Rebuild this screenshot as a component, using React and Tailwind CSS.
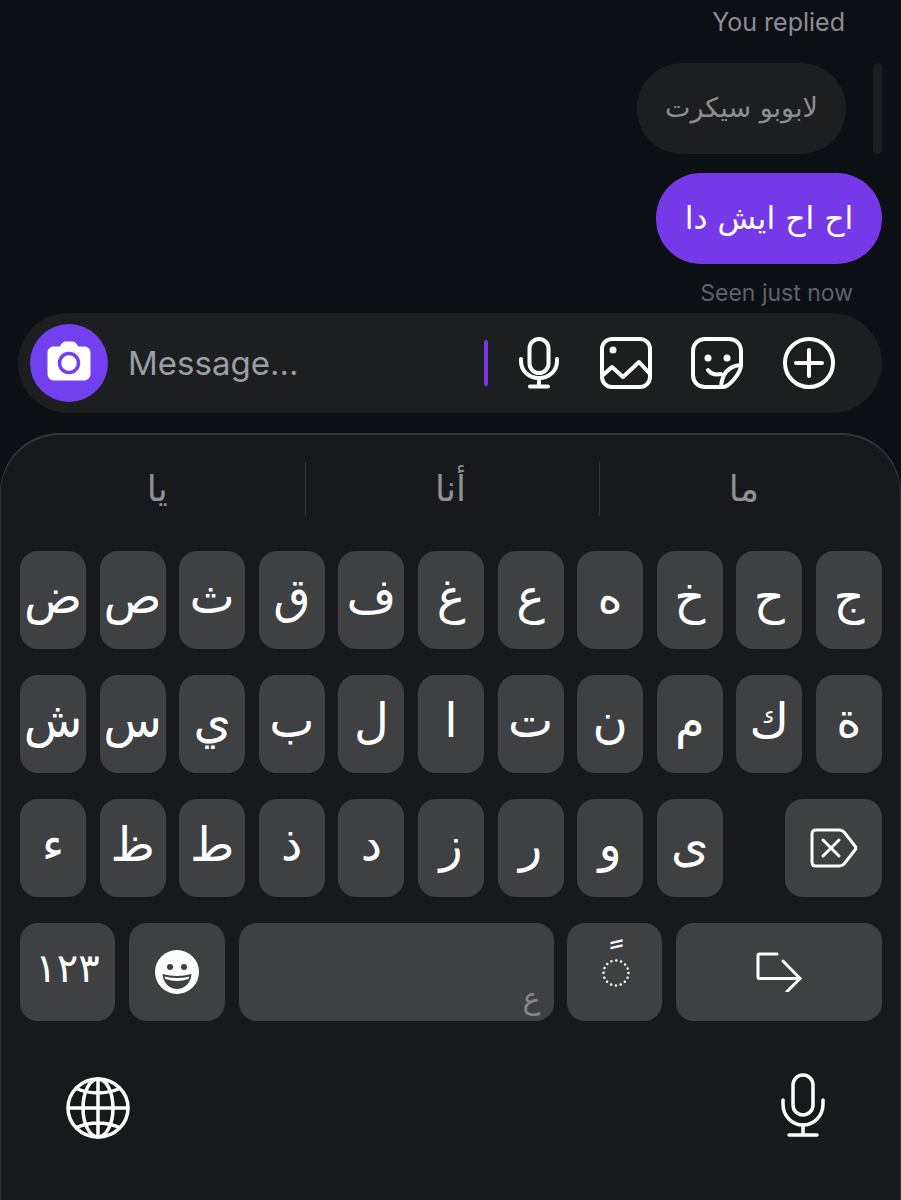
import React from 'react';

const arabic = "font-['DejaVu_Sans',sans-serif]";

const rowOne = ['ض', 'ص', 'ث', 'ق', 'ف', 'غ', 'ع', 'ه', 'خ', 'ح', 'ج'];
const rowTwo = ['ش', 'س', 'ي', 'ب', 'ل', 'ا', 'ت', 'ن', 'م', 'ك', 'ة'];
const rowThree = ['ء', 'ظ', 'ط', 'ذ', 'د', 'ز', 'ر', 'و', 'ى'];

// Toolbar and keyboard icons
const CameraIcon = () => (
  <svg className="mb-[4px]" width="44" height="40" viewBox="0 0 44 40">
    <path d="M13 5.500C14 2.500 16 0.500 19 0.500h6c3 0 5 2 6 5h6.500c3 0 6 2.500 6 6V33c0 3.500-3 6.500-6 6.500h-31c-3 0-6-3-6-6.500V11.500c0-3.500 3-6 6-6z" fill="#fff" />
    <circle cx="22" cy="22" r="9.500" fill="none" stroke="#7340f0" strokeWidth="3.500" />
  </svg>
);

const SmallMicIcon = () => (
  <svg width="40" height="52" viewBox="0 0 40 52" fill="none" stroke="#fff" strokeWidth="4" strokeLinecap="round" strokeLinejoin="round">
    <rect x="10.500" y="2" width="19" height="34" rx="9.500" />
    <path d="M2 22v2c0 10 8 17 18 17s18-7 18-17v-2" />
    <path d="M20 41v8M11 49.500h18" />
  </svg>
);

const LargeMicIcon = () => (
  <svg width="44" height="64" viewBox="0 0 44 64" fill="none" stroke="#fff" strokeWidth="3.500" strokeLinecap="round" strokeLinejoin="round">
    <rect x="12" y="2" width="20" height="40" rx="10" />
    <path d="M2 27v4c0 12 9 21 20 21s20-9 20-21v-4" />
    <path d="M22 52v10M8 62h28" />
  </svg>
);

const ImageIcon = () => (
  <svg width="52" height="52" viewBox="0 0 52 52" fill="none" stroke="#fff" strokeWidth="4" strokeLinecap="round" strokeLinejoin="round">
    <rect x="2" y="2" width="48" height="48" rx="10" />
    <circle cx="13" cy="13" r="3.500" fill="#fff" stroke="none" />
    <path d="M2 39l10-9 11 10 16-15 11 12" />
  </svg>
);

const StickerIcon = () => (
  <svg width="52" height="52" viewBox="0 0 52 52" fill="none" stroke="#fff" strokeWidth="4" strokeLinecap="round" strokeLinejoin="round">
    <path d="M32 50H14C7 50 2 45 2 38V14C2 7 7 2 14 2h24c7 0 12 5 12 12v14C50 36 38 50 32 50z" />
    <path d="M50 28C38 29 31 36 30 50" />
    <path d="M17 33c3 4 8 5 13 4" />
    <circle cx="17" cy="21" r="3.500" fill="#fff" stroke="none" />
    <circle cx="36" cy="21" r="3.500" fill="#fff" stroke="none" />
  </svg>
);

const PlusIcon = () => (
  <svg width="54" height="54" viewBox="0 0 54 54" fill="none" stroke="#fff" strokeWidth="4" strokeLinecap="round">
    <circle cx="27" cy="27" r="24" />
    <path d="M27 14v26M14 27h26" />
  </svg>
);

const BackspaceIcon = () => (
  <svg width="48" height="40" viewBox="0 0 48 40" fill="none" stroke="#fff" strokeWidth="3" strokeLinecap="round" strokeLinejoin="round">
    <path d="M6 2h23c2 0 3.500 0.500 5 2l11 14c1 1.300 1 2.700 0 4L34 36c-1.500 1.500-3 2-5 2H6c-2.500 0-4-1.500-4-4V6c0-2.500 1.500-4 4-4z" />
    <path d="M13 12l16 16M29 12L13 28" />
  </svg>
);

const EnterIcon = () => (
  <svg width="46" height="40" viewBox="0 0 46 40" fill="none" stroke="#fff" strokeWidth="3" strokeLinecap="round" strokeLinejoin="round">
    <path d="M21 2H3.500c-1 0-1.500 0.500-1.500 1.500V25c0 1 .5 1.500 1.500 1.500H44" />
    <path d="M27 9l17 17.500-13 13" />
  </svg>
);

const EmojiIcon = () => (
  <svg width="44" height="44" viewBox="0 0 44 44">
    <circle cx="22" cy="22" r="22" fill="#fff" />
    <circle cx="15" cy="17" r="3" fill="#3f4042" />
    <circle cx="29" cy="17" r="3" fill="#3f4042" />
    <path d="M7.500 24Q22 28 36.500 24C36 33 29 39 22 39S8 33 7.500 24z" fill="#3f4042" />
    <path d="M9.500 26.500Q22 29.500 34.500 26.500L33.500 29Q22 33 10.500 29z" fill="#fff" />
  </svg>
);

const GlobeIcon = () => (
  <svg width="64" height="62" viewBox="0 0 64 62" fill="none" stroke="#fff" strokeWidth="3.500">
    <ellipse cx="32" cy="31" rx="30" ry="29" />
    <ellipse cx="32" cy="31" rx="15" ry="29" />
    <path d="M32 2v58M2 31h60M9 11Q32 21 55 11M9 51Q32 41 55 51" />
  </svg>
);

const Key = ({ children, className = 'w-[66px]' }) => (
  <div className={`${className} h-[98px] shrink-0 rounded-[18px] bg-[#3f4042] flex items-center justify-center text-white relative ${arabic}`}>
    {children}
  </div>
);

const Letter = ({ letter }) => (
  <Key>
    <span className="text-[48px] leading-none mb-[8px]">{letter}</span>
  </Key>
);

const Suggestion = ({ text, divider }) => (
  <div className={`flex-1 h-[54px] pr-[4px] flex items-center justify-center text-[36px] text-[#8f9092] ${arabic} ${divider ? 'border-r border-[#37393c]' : ''}`}>
    {text}
  </div>
);

export default function App() {
  return (
    <div className="w-[901px] h-[1200px] overflow-hidden bg-[#0c0f14] flex flex-col font-['Inter',sans-serif]">
      {/* Message thread */}
      <div className="h-[313px] pt-[7px] pr-[19px] flex flex-col items-end">
        <div className="pr-[37px] h-[30px] leading-[30px] text-[25px] text-[#8e8e93]">You replied</div>
        <div className="mt-[26px] flex items-start gap-[27px]">
          <div className={`w-[209px] h-[91px] rounded-[45px] bg-[#1c1e20] flex items-center justify-center text-[27px] text-[#8e8e93] ${arabic}`} dir="rtl">
            لابوبو سيكرت
          </div>
          <div className="w-[9px] h-[91px] rounded-full bg-[#1c1e20]" />
        </div>
        <div className={`mt-[19px] w-[226px] h-[91px] rounded-[45px] bg-[#7539e8] flex items-center justify-center text-[31.500px] text-white ${arabic}`} dir="rtl">
          اح اح ايش دا
        </div>
        <div className="mt-[15px] pr-[29px] h-[28px] leading-[28px] text-[23px] text-[#5f6368]">Seen just now</div>
      </div>

      {/* Composer */}
      <div className="mx-[18px] w-[864px] h-[100px] shrink-0 rounded-[50px] bg-[#1c1e20] flex items-center pl-[12px]">
        <div className="w-[78px] h-[78px] rounded-full bg-[#7340f0] flex items-center justify-center">
          <CameraIcon />
        </div>
        <div className="ml-[20px] mt-[2px] w-[356px] text-[33px] text-[#9b9ea3]">Message...</div>
        <div className="w-[4px] h-[46px] rounded-full bg-[#7539e8]" />
        <div className="ml-[31px] flex items-center">
          <SmallMicIcon />
          <div className="ml-[41px]"><ImageIcon /></div>
          <div className="ml-[39px]"><StickerIcon /></div>
          <div className="ml-[39px]"><PlusIcon /></div>
        </div>
      </div>

      {/* Keyboard */}
      <div className="mt-[20px] flex-1 rounded-t-[60px] border-t-2 border-x border-[#33363a] bg-[#17191c] flex flex-col">
        <div className="mt-[27px] flex pl-[12px] pr-[8px]">
          <Suggestion text="يا" divider />
          <Suggestion text="أنا" divider />
          <Suggestion text="ما" />
        </div>
        <div className="mt-[35px] pl-[19px] pr-[18px] flex flex-col gap-[26px]">
          <div className="flex justify-between">
            {rowOne.map((letter) => <Letter key={letter} letter={letter} />)}
          </div>
          <div className="flex justify-between">
            {rowTwo.map((letter) => <Letter key={letter} letter={letter} />)}
          </div>
          <div className="flex justify-between">
            <div className="flex gap-[13.600px]">
              {rowThree.map((letter) => <Letter key={letter} letter={letter} />)}
            </div>
            <Key className="w-[97px]"><BackspaceIcon /></Key>
          </div>
          <div className="flex justify-between">
            <Key className="w-[95px]"><span className="text-[40px] leading-none mb-[8px]">١٢٣</span></Key>
            <Key className="w-[96px]"><EmojiIcon /></Key>
            <Key className="w-[315px]">
              <span className="absolute right-[13px] bottom-[7px] text-[30px] leading-none text-[#85868a]">ع</span>
            </Key>
            <Key className="w-[95px]">
              <svg className="mt-[2px] ml-[2px]" width="28" height="28" viewBox="0 0 28 28" fill="none" stroke="#fff" strokeWidth="2.500" strokeLinecap="round" strokeDasharray="0 4.900">
                <circle cx="14" cy="14" r="12.500" />
              </svg>
              <span className="absolute left-0 right-[4px] top-[16px] text-center text-[42px] leading-none">{'\u00A0\u064B'}</span>
            </Key>
            <Key className="w-[206px]"><EnterIcon /></Key>
          </div>
        </div>
        <div className="mt-[52px] pl-[65px] pr-[75px] flex items-start justify-between">
          <div className="mt-[4px]"><GlobeIcon /></div>
          <LargeMicIcon />
        </div>
      </div>
    </div>
  );
}
